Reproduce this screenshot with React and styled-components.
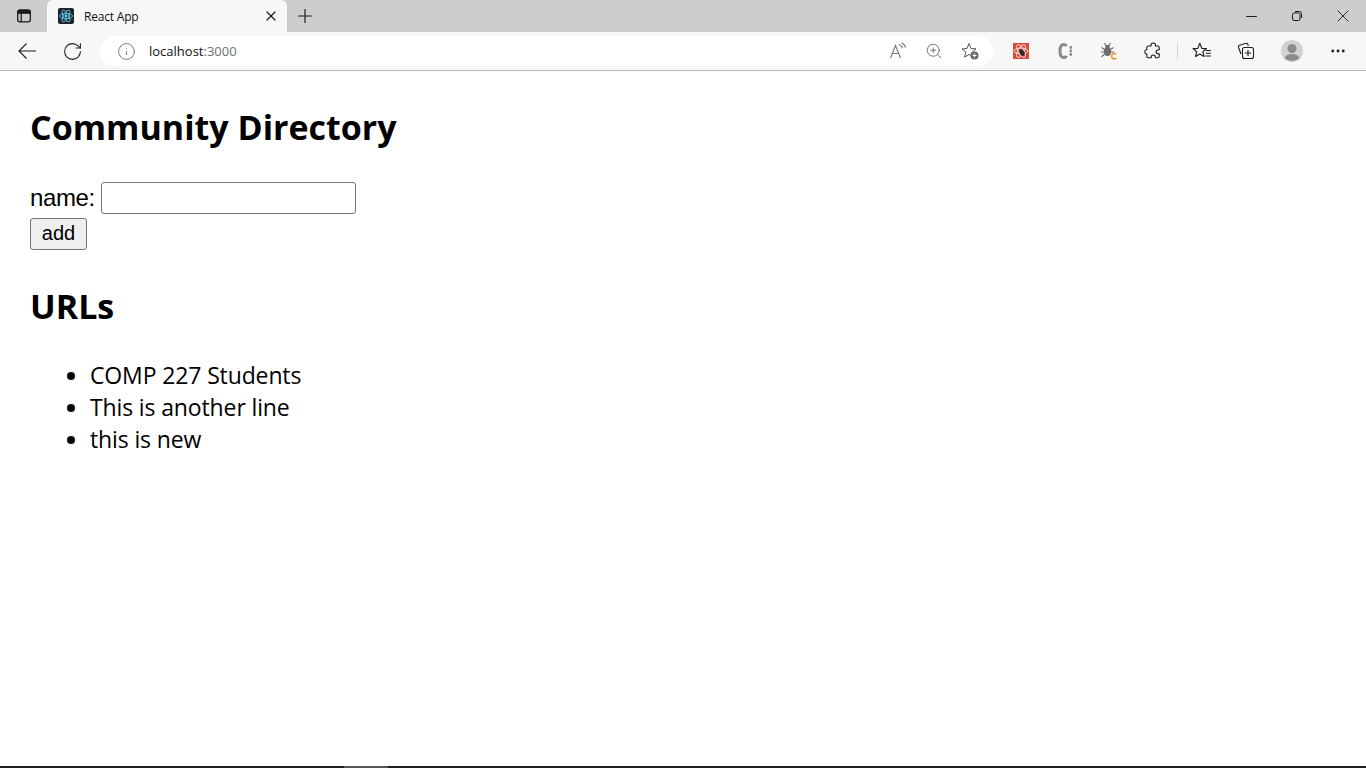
import React from 'react'
import styled, { createGlobalStyle } from 'styled-components'
import { RotateCw, Info, ZoomIn, Plus, X, Minus, MoreHorizontal } from 'lucide-react'

const GlobalStyle = createGlobalStyle`
  html, body {
    margin: 0;
    padding: 0;
    height: 100%;
    background: #fff;
    overflow: hidden;
  }
  #root {
    height: 100%;
  }
`

const Page = styled.div`
  height: 768px;
  display: flex;
  flex-direction: column;
  font-family: 'Open Sans', 'Liberation Sans', sans-serif;
`

const TabStrip = styled.div`
  height: 32px;
  background: #cdcdcd;
  display: flex;
  align-items: flex-end;
  flex-shrink: 0;
`

const IconSlot = styled.div`
  width: ${p => p.$w || 44}px;
  height: ${p => p.$h || 32}px;
  display: flex;
  align-items: center;
  justify-content: center;
  color: ${p => p.$color || '#1b1b1b'};
  flex-shrink: 0;
`

const SidebarButton = styled(IconSlot)`
  width: 47px;
`

const Tab = styled.div`
  width: 240px;
  height: 32px;
  background: #f7f7f7;
  border-radius: 6px 6px 0 0;
  display: flex;
  align-items: center;
  padding: 0 8px 0 11px;
  box-sizing: border-box;
`

const TabTitle = styled.span`
  flex: 1;
  margin-left: 10px;
  font-family: 'Open Sans', sans-serif;
  font-size: 12px;
  letter-spacing: -0.2px;
  color: #111;
`

const Spacer = styled.div`
  flex: 1;
`

const Toolbar = styled.div`
  height: 38px;
  background: #f7f7f7;
  border-bottom: 1px solid #b9b9b9;
  display: flex;
  align-items: center;
  flex-shrink: 0;
`

const NavButton = styled(IconSlot)`
  height: 38px;
`

const AddressBar = styled.div`
  width: 893px;
  height: 30px;
  margin-left: 10px;
  background: #fff;
  border-radius: 15px;
  display: flex;
  align-items: center;
  padding: 0 14px 0 17px;
  box-sizing: border-box;
  flex-shrink: 0;
`

const Url = styled.span`
  flex: 1;
  margin-left: 13px;
  font-family: 'Open Sans', sans-serif;
  font-size: 13px;
  color: #111;
`

const Port = styled.span`
  color: #6f6f6f;
`

const AddressIcons = styled.div`
  display: flex;
  align-items: center;
  gap: 18px;
`

const Extensions = styled.div`
  display: flex;
  align-items: center;
  margin-left: 6px;
`

const Divider = styled.div`
  width: 1px;
  height: 16px;
  margin-left: 2px;
  background: #d0d0d0;
`

const Content = styled.main`
  flex: 1;
  padding: 0 30px;
  color: #000;
`

const Title = styled.h1`
  margin: 32px 0 0;
  font-family: 'Open Sans', sans-serif;
  font-size: 34px;
  line-height: 48px;
  font-weight: 700;
`

const NameForm = styled.form`
  margin-top: 31px;
  font-family: 'Liberation Sans', Arial, sans-serif;
  font-size: 24px;
`

const FormRow = styled.div`
  display: flex;
  align-items: center;
  height: 32px;
  margin-bottom: 4px;
  letter-spacing: -0.4px;
`

const NameInput = styled.input`
  width: 255px;
  height: 32px;
  margin-left: 6px;
  box-sizing: border-box;
  border: 1px solid #767676;
  border-radius: 3px;
  background: #fff;
`

const AddButton = styled.button`
  display: block;
  width: 57px;
  height: 32px;
  padding: 0 0 2px;
  box-sizing: border-box;
  border: 1px solid #767676;
  border-radius: 3px;
  background: #efefef;
  font-family: 'Liberation Sans', Arial, sans-serif;
  font-size: 20px;
  color: #000;
`

const SectionTitle = styled(Title)`
  margin-top: 32px;
`

const UrlList = styled.ul`
  margin: 29px 0 0;
  padding-left: 60px;
  font-family: 'Open Sans', sans-serif;
  font-size: 23px;
  line-height: 32px;
  letter-spacing: -0.13px;
`

const TaskBar = styled.div`
  height: 2px;
  background: #222;
  flex-shrink: 0;
  display: flex;
`

const TaskBarActive = styled.div`
  width: 44px;
  margin-left: 344px;
  background: #555;
`

const ReactLogo = () => (
  <svg width="16" height="16" viewBox="0 0 16 16">
    <rect width="16" height="16" rx="2" fill="#20232a" />
    <g fill="none" stroke="#61dafb" strokeWidth="0.8">
      <ellipse cx="8" cy="8" rx="6.5" ry="2.6" />
      <ellipse cx="8" cy="8" rx="6.5" ry="2.6" transform="rotate(60 8 8)" />
      <ellipse cx="8" cy="8" rx="6.5" ry="2.6" transform="rotate(120 8 8)" />
    </g>
    <circle cx="8" cy="8" r="1.4" fill="#61dafb" />
  </svg>
)

const SidebarIcon = () => (
  <svg width="16" height="16" viewBox="0 0 16 16" fill="none" stroke="#1b1b1b" strokeWidth="1.3">
    <rect x="1.7" y="2.2" width="12.6" height="11.6" rx="2" />
    <path d="M5.2 5.2v8.6" />
    <path d="M1.7 5.2V4.2a2 2 0 0 1 2-2h8.6a2 2 0 0 1 2 2v1z" fill="#1b1b1b" />
  </svg>
)

const BackIcon = () => (
  <svg width="20" height="20" viewBox="0 0 20 20" fill="none" stroke="#1b1b1b" strokeWidth="1.1">
    <path d="M19 10H2M9.500 2.500 2 10l7.500 7.500" />
  </svg>
)

const ReadAloudIcon = () => (
  <svg width="18" height="18" viewBox="0 0 18 18" fill="none" stroke="#777" strokeWidth="1.1">
    <path d="M1.5 16 6.5 3.5 11.5 16M3.4 11.5h6.2" />
    <path d="M10 2.5c2 .6 3 1.8 3.4 3.6M12.5 1c2.2.8 3.6 2.4 4 4.6" />
  </svg>
)

const StarAddIcon = () => (
  <svg width="18" height="18" viewBox="0 0 18 18" fill="none">
    <path d="M8 1.5 10 6.5l5 .4-3.800 3.200 1.200 5L8 12.400l-4.400 2.700 1.200-5L1 6.900l5-.4z" stroke="#555" strokeWidth="1" strokeLinejoin="round" />
    <circle cx="13.500" cy="13.500" r="4" fill="#666" />
    <path d="M13.500 11.500v4M11.500 13.500h4" stroke="#fff" strokeWidth="1.1" />
  </svg>
)

const PuzzleIcon = () => (
  <svg width="18" height="18" viewBox="0 0 18 18" fill="none" stroke="#1b1b1b" strokeWidth="1.1" strokeLinejoin="round">
    <path d="M7 3.200C7 1.700 8.200 1 9.300 1s2.200.7 2.200 2.200V4h2.200c.9 0 1.500.6 1.500 1.500v2.200h-.7c-1.500 0-2.300 1-2.300 2.100s.8 2.100 2.300 2.100h.7v2.300c0 .9-.6 1.500-1.500 1.500h-2.300v-.6c0-1.300-1-2.100-2.100-2.100s-2.100.8-2.100 2.100v.6H4.300c-.9 0-1.500-.6-1.500-1.500v-2.200h-.5C1 12 .8 11 .8 9.900S1 7.800 2.300 7.800h.5V5.500C2.800 4.600 3.400 4 4.300 4H7z" />
  </svg>
)

const StarListIcon = () => (
  <svg width="20" height="20" viewBox="0 0 18 18" fill="none" stroke="#1b1b1b" strokeWidth="1" strokeLinejoin="round">
    <path d="M7 2 8.800 6.600l4.200.3-3.200 2.800 1 4.300L7 11.700 3.200 14l1-4.300L1 6.900l4.200-.3z" />
    <path d="M12.500 8.500h4.500M12.500 11H17M12 13.500h5" />
  </svg>
)

const CollectionsIcon = () => (
  <svg width="18" height="18" viewBox="0 0 18 18" fill="none" stroke="#1b1b1b" strokeWidth="1.1" strokeLinejoin="round">
    <path d="M4 12 1.500 5.200a1.500 1.500 0 0 1 1-1.900L9 1.300a1.500 1.500 0 0 1 1.800.9L11.300 4" />
    <rect x="5.500" y="5.500" width="11" height="11" rx="2" />
    <path d="M11 8v6M8 11h6" />
  </svg>
)

const RestoreIcon = () => (
  <svg width="12" height="12" viewBox="0 0 12 12" fill="none" stroke="#1b1b1b" strokeWidth="1">
    <rect x="1.500" y="3" width="7.500" height="7.500" rx="1.500" />
    <path d="M4 1.500h4.500a2 2 0 0 1 2 2V8" />
  </svg>
)

const AtomExtension = () => (
  <svg width="16" height="16" viewBox="0 0 16 16">
    <rect width="16" height="16" fill="#d9483b" />
    <g fill="none" stroke="#f8dcd7" strokeWidth="1">
      <ellipse cx="8" cy="8" rx="7" ry="3" />
      <ellipse cx="8" cy="8" rx="7" ry="3" transform="rotate(60 8 8)" />
      <ellipse cx="8" cy="8" rx="7" ry="3" transform="rotate(120 8 8)" />
    </g>
    <path d="M6 6.500h3l3 3-1 3-2.500.5-2-3z" fill="#2b2b2b" />
  </svg>
)

const CssExtension = () => (
  <svg width="16" height="18" viewBox="0 0 16 18" fill="none">
    <path d="M9.500 4.200C9 3 8 2.500 6.800 2.500 4.300 2.500 3 4.500 3 9s1.300 6.500 3.800 6.500c1.200 0 2.200-.5 2.700-1.700" stroke="#8a8a8a" strokeWidth="3" />
    <circle cx="13.800" cy="5.500" r="1.400" fill="#8a8a8a" />
    <circle cx="13.800" cy="9" r="1.400" fill="#8a8a8a" />
    <circle cx="13.800" cy="12.500" r="1.400" fill="#8a8a8a" />
  </svg>
)

const BugExtension = () => (
  <svg width="16" height="18" viewBox="0 0 16 18" fill="none">
    <ellipse cx="6.500" cy="9.500" rx="3.600" ry="4.500" fill="#6d6d6d" />
    <circle cx="6.500" cy="5" r="2.200" fill="#6d6d6d" />
    <path d="M.5 5.500 3.500 7.500M12.500 5.500 9.500 7.500M0 10h3M13 10h-3M.5 15l3-3M3.500 1 5 4M9.500 1 8 4" stroke="#6d6d6d" strokeWidth="1.100" />
    <path d="M15.200 12.300a2.700 2.700 0 1 0 0 3.800" stroke="#f29423" strokeWidth="1.600" />
  </svg>
)

const ProfileIcon = () => (
  <svg width="22" height="22" viewBox="0 0 22 22">
    <circle cx="11" cy="11" r="11" fill="#d2d2d2" />
    <circle cx="11" cy="8.500" r="4.500" fill="#8b8b8b" />
    <path d="M3.500 18c1.500-3 4-4 7.500-4s6 1 7.500 4a11 11 0 0 1-15 0z" fill="#8b8b8b" />
  </svg>
)

function App () {
  return (
    <Page>
      <GlobalStyle />
      <TabStrip>
        <SidebarButton><SidebarIcon /></SidebarButton>
        <Tab>
          <ReactLogo />
          <TabTitle>React App</TabTitle>
          <X size={16} color='#1b1b1b' strokeWidth={1.8} />
        </Tab>
        <IconSlot $w={36}><Plus size={22} strokeWidth={1.3} /></IconSlot>
        <Spacer />
        <IconSlot $w={46}><Minus size={17} strokeWidth={1.4} /></IconSlot>
        <IconSlot $w={46}><RestoreIcon /></IconSlot>
        <IconSlot $w={46}><X size={20} strokeWidth={1.1} /></IconSlot>
      </TabStrip>
      <Toolbar>
        <NavButton $w={54} $h={38}><BackIcon /></NavButton>
        <NavButton $w={36} $h={38}><RotateCw size={21} strokeWidth={1.2} /></NavButton>
        <AddressBar>
          <Info size={19} color='#666' strokeWidth={1.1} />
          <Url>localhost<Port>:3000</Port></Url>
          <AddressIcons>
            <ReadAloudIcon />
            <ZoomIn size={18} color='#666' strokeWidth={1.2} />
            <StarAddIcon />
          </AddressIcons>
        </AddressBar>
        <Extensions>
          <NavButton $w={44}><AtomExtension /></NavButton>
          <NavButton $w={44}><CssExtension /></NavButton>
          <NavButton $w={44}><BugExtension /></NavButton>
          <NavButton $w={44}><PuzzleIcon /></NavButton>
          <Divider />
          <NavButton $w={48}><StarListIcon /></NavButton>
          <NavButton $w={40}><CollectionsIcon /></NavButton>
          <NavButton $w={52}><ProfileIcon /></NavButton>
          <NavButton $w={40}><MoreHorizontal size={18} strokeWidth={1.8} /></NavButton>
        </Extensions>
      </Toolbar>
      <Content>
        <Title>Community Directory</Title>
        <NameForm>
          <FormRow>
            name:
            <NameInput type='text' />
          </FormRow>
          <AddButton type='button'>add</AddButton>
        </NameForm>
        <SectionTitle as='h1'>URLs</SectionTitle>
        <UrlList>
          <li>COMP 227 Students</li>
          <li>This is another line</li>
          <li>this is new</li>
        </UrlList>
      </Content>
      <TaskBar><TaskBarActive /></TaskBar>
    </Page>
  )
}

export default App
